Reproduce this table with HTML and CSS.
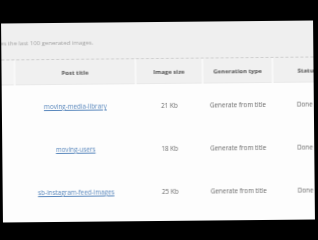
FILE: index.html
```html
<!DOCTYPE html>
<html>
<head>
<meta charset="utf-8">
<link rel="stylesheet" href="styles.css">
</head>
<body>
<div class="screen">
  <div class="intro"><span class="intro-text">The log includes the last 100 generated images.</span></div>
  <table class="log">
    <colgroup>
      <col class="c-pad"><col class="c-title"><col class="c-size"><col class="c-type"><col class="c-status">
    </colgroup>
    <thead>
      <tr>
        <th></th>
        <th>Post title</th>
        <th>Image size</th>
        <th>Generation type</th>
        <th class="st">Status</th>
      </tr>
    </thead>
    <tbody>
      <tr>
        <td></td>
        <td><a href="#">moving-media-library</a></td>
        <td>21 Kb</td>
        <td>Generate from title</td>
        <td class="st">Done</td>
      </tr>
      <tr>
        <td></td>
        <td><a href="#">moving-users</a></td>
        <td>18 Kb</td>
        <td>Generate from title</td>
        <td class="st">Done</td>
      </tr>
      <tr>
        <td></td>
        <td><a href="#">sb-instagram-feed-images</a></td>
        <td>25 Kb</td>
        <td>Generate from title</td>
        <td class="st">Done</td>
      </tr>
    </tbody>
  </table>
</div>
</body>
</html>
```
FILE: styles.css
```css
html, body {
  margin: 0;
  padding: 0;
  background: #000;
  overflow: hidden;
  height: 240px;
}
.screen {
  width: 312px;
  height: 199px;
  margin: 22px 0 0 2px;
  background: #fdfdfd;
  overflow: hidden;
  transform: rotate(-0.55deg);
  filter: blur(0.3px);
  font-family: "Open Sans", "Noto Sans", sans-serif;
}
.intro {
  height: 37px;
  background: #efefef;
  border-bottom: 1px dashed #cfcfcf;
  display: flex;
  align-items: center;
  padding-top: 4px;
  box-sizing: border-box;
}
.intro-text {
  font-size: 6px;
  color: #a2a2a2;
  margin-left: -40px;
  white-space: nowrap;
}
.log {
  border-collapse: collapse;
  table-layout: fixed;
  width: 345px;
  font-size: 6.3px;
}
.c-pad { width: 13px; }
.c-title { width: 121px; }
.c-size { width: 67px; }
.c-type { width: 70px; }
.c-status { width: 74px; }
.log th {
  height: 23px;
  padding: 1px 0 0;
  background: #f0f0f0;
  color: #555;
  font-size: 6px;
  font-weight: 700;
  text-align: center;
  border-left: 2px solid #f8f8f8;
  border-bottom: 1px solid #e9e9e9;
}
.log th:first-child { border-left: none; background: #f4f4f4; }
.log td {
  height: 43px;
  color: #6a6a6a;
  text-align: center;
  padding: 0;
}
.log .st { text-align: left; padding-left: 24px; }
.log a {
  color: #5a88bd;
  text-decoration: underline;
}
```
